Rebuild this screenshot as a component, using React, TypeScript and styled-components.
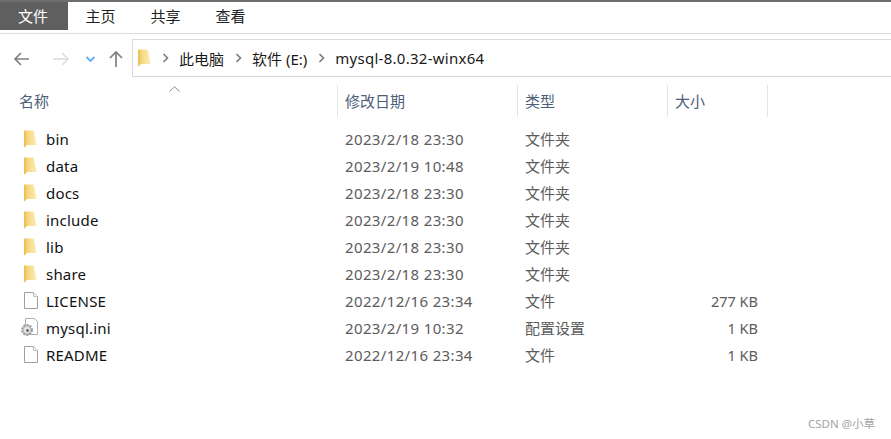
import React from 'react';
import styled, { createGlobalStyle } from 'styled-components';

const FONT = `"Noto Sans", "Noto Sans CJK SC", sans-serif`;

const GlobalStyle = createGlobalStyle`
  html, body {
    margin: 0;
    padding: 0;
    background: #fff;
  }
  body {
    font-family: ${FONT};
    overflow: hidden;
  }
`;

const Window = styled.div`
  position: relative;
  width: 891px;
  height: 439px;
  background: #fff;
  border-top: 2px solid #6d6d6d;
  box-sizing: border-box;
  overflow: hidden;
`;

const Ribbon = styled.div`
  display: flex;
  height: 31px;
  border-bottom: 1px solid #dcdcdc;
`;

const Tab = styled.div<{ $active?: boolean }>`
  width: ${({ $active }) => ($active ? '68px' : '65px')};
  height: 28px;
  box-sizing: border-box;
  padding-bottom: 2px;
  padding-right: ${({ $active }) => ($active ? '2px' : '0')};
  display: flex;
  align-items: center;
  justify-content: center;
  font-size: 15px;
  color: ${({ $active }) => ($active ? '#fff' : '#222')};
  background: ${({ $active }) => ($active ? '#5f5f5f' : 'transparent')};
`;

const NavBar = styled.div`
  display: flex;
  align-items: center;
  margin-top: 5px;
  height: 38px;
`;

const NavButtons = styled.div`
  width: 132px;
  height: 38px;
  flex: none;
  display: flex;
  align-items: center;
`;

const AddressBox = styled.div`
  flex: 1;
  height: 38px;
  box-sizing: border-box;
  border: 1px solid #d9d9d9;
  border-right: none;
  display: flex;
  align-items: center;
  padding-left: 5px;
  font-size: 15px;
  color: #1a1a1a;
`;

const Crumb = styled.span<{ $spaced?: boolean }>`
  white-space: nowrap;
  letter-spacing: ${({ $spaced }) => ($spaced ? '0.27px' : '0')};
`;

const CrumbSep = styled.svg`
  width: 7px;
  height: 10px;
  margin: 0 10px 0 11px;
  flex: none;
`;

const HeaderRow = styled.div`
  display: grid;
  grid-template-columns: 337px 180px 150px 100px 1px;
  height: 32px;
  margin-top: 8px;
  position: relative;
`;

const HeaderCell = styled.div<{ $first?: boolean }>`
  display: flex;
  align-items: center;
  box-sizing: border-box;
  padding-left: ${({ $first }) => ($first ? '19px' : '7px')};
  padding-bottom: 2px;
  border-left: ${({ $first }) => ($first ? 'none' : '1px solid #e5e5e5')};
  font-size: 15px;
  color: #4c607a;
`;

const LastEdge = styled.div`
  background: #e5e5e5;
`;

const SortCaret = styled.svg`
  position: absolute;
  left: 169px;
  top: 1px;
  width: 11px;
  height: 6px;
`;

const List = styled.div`
  margin-top: 8px;
`;

const Row = styled.div`
  display: grid;
  grid-template-columns: 338px 180px 150px 90px;
  height: 27px;
  align-items: center;
  font-size: 15px;
`;

const NameCell = styled.div`
  display: flex;
  align-items: center;
  padding-left: 24px;
  color: #111;
  letter-spacing: 0.2px;
`;

const IconSlot = styled.div`
  width: 22px;
  height: 20px;
  display: flex;
  align-items: center;
  flex: none;
`;

const DateCell = styled.div`
  padding-left: 7px;
  color: #5c5c5c;
  white-space: nowrap;
  letter-spacing: 0.36px;
`;

const TypeCell = styled.div`
  padding-left: 7px;
  color: #5c5c5c;
  white-space: nowrap;
`;

const SizeCell = styled.div`
  font-size: 14.5px;
  text-align: right;
  color: #5c5c5c;
  white-space: nowrap;
`;

const Watermark = styled.div`
  position: absolute;
  right: 16px;
  top: 413px;
  font-size: 11.5px;
  color: #a3a3a3;
`;

const FolderIcon = ({ id }: { id: string }) => (
  <svg width="13" height="18" viewBox="0 0 13 18" style={{ flex: 'none' }}>
    <defs>
      <linearGradient id={id} x1="0" x2="1" y1="0" y2="0">
        <stop offset="0" stopColor="#f1cb62" />
        <stop offset="0.5" stopColor="#f8de90" />
        <stop offset="1" stopColor="#fcebb4" />
      </linearGradient>
    </defs>
    <path d="M0 0.5 H9.5 L10 2 L12.5 15 H3 L0 17.5 Z" fill={`url(#${id})`} />
    <path d="M0 0.5 V17.5 L2 16 V1.5 Z" fill="#ecc35a" />
  </svg>
);

const FileIcon = () => (
  <svg width="14" height="17" viewBox="0 0 14 17">
    <path d="M0.5 0.5 H9.5 L13.5 4.5 V16.5 H0.5 Z" fill="#fff" stroke="#a0a0a0" />
    <path d="M9.5 0.5 V4.5 H13.5" fill="#f2f2f2" stroke="#c4c4c4" />
  </svg>
);

const IniIcon = () => (
  <svg width="18" height="19" viewBox="0 0 18 19" style={{ marginLeft: -3 }}>
    <path d="M4.5 0.5 H13.5 L16.5 3.5 V16.5 H4.5 Z" fill="#fff" stroke="#b0b0b0" />
    <circle cx="6" cy="12" r="5" fill="#c4c4c4" stroke="#a0a0a0" strokeWidth="2" strokeDasharray="2 1.2" />
    <circle cx="6" cy="12" r="3" fill="#e6e6e6" />
    <circle cx="6.5" cy="12.5" r="1.3" fill="#4d4d4d" />
  </svg>
);

type Entry = { name: string; date: string; type: string; size?: string; kind: 'folder' | 'file' | 'ini' };

const entries: Entry[] = [
  { name: 'bin', date: '2023/2/18 23:30', type: '文件夹', kind: 'folder' },
  { name: 'data', date: '2023/2/19 10:48', type: '文件夹', kind: 'folder' },
  { name: 'docs', date: '2023/2/18 23:30', type: '文件夹', kind: 'folder' },
  { name: 'include', date: '2023/2/18 23:30', type: '文件夹', kind: 'folder' },
  { name: 'lib', date: '2023/2/18 23:30', type: '文件夹', kind: 'folder' },
  { name: 'share', date: '2023/2/18 23:30', type: '文件夹', kind: 'folder' },
  { name: 'LICENSE', date: '2022/12/16 23:34', type: '文件', size: '277 KB', kind: 'file' },
  { name: 'mysql.ini', date: '2023/2/19 10:32', type: '配置设置', size: '1 KB', kind: 'ini' },
  { name: 'README', date: '2022/12/16 23:34', type: '文件', size: '1 KB', kind: 'file' },
];

const Chevron = () => (
  <CrumbSep viewBox="0 0 7 10">
    <path d="M1.5 1 L5.5 5 L1.5 9" fill="none" stroke="#7a7a7a" strokeWidth="1.6" />
  </CrumbSep>
);

const App = () => (
  <Window>
    <GlobalStyle />
    <Ribbon>
      <Tab $active>文件</Tab>
      <Tab>主页</Tab>
      <Tab>共享</Tab>
      <Tab>查看</Tab>
    </Ribbon>
    <NavBar>
      <NavButtons>
        <svg width="132" height="38" viewBox="0 0 132 38">
          <path d="M29 20 H15 M21 14 L15 20 L21 26" fill="none" stroke="#7f7f7f" strokeWidth="1.6" />
          <path d="M53 20 H68 M62 14 L68 20 L62 26" fill="none" stroke="#dcdcdc" strokeWidth="1.6" />
          <path d="M86.5 18 L90.5 22 L94.5 18" fill="none" stroke="#5fb0f2" strokeWidth="1.8" />
          <path d="M116 28 V13 M110 19 L116 13 L122 19" fill="none" stroke="#7f7f7f" strokeWidth="1.7" />
        </svg>
      </NavButtons>
      <AddressBox>
        <FolderIcon id="addr-folder" />
        <Chevron />
        <Crumb>此电脑</Crumb>
        <Chevron />
        <Crumb>软件 (E:)</Crumb>
        <Chevron />
        <Crumb $spaced>mysql-8.0.32-winx64</Crumb>
      </AddressBox>
    </NavBar>
    <HeaderRow>
      <SortCaret viewBox="0 0 11 6">
        <path d="M0.5 5.5 L5.5 0.8 L10.5 5.5" fill="none" stroke="#8a8a8a" />
      </SortCaret>
      <HeaderCell $first>名称</HeaderCell>
      <HeaderCell>修改日期</HeaderCell>
      <HeaderCell>类型</HeaderCell>
      <HeaderCell>大小</HeaderCell>
      <LastEdge />
    </HeaderRow>
    <List>
      {entries.map((entry) => (
        <Row key={entry.name}>
          <NameCell>
            <IconSlot>
              {entry.kind === 'folder' && <FolderIcon id={`folder-${entry.name}`} />}
              {entry.kind === 'file' && <FileIcon />}
              {entry.kind === 'ini' && <IniIcon />}
            </IconSlot>
            {entry.name}
          </NameCell>
          <DateCell>{entry.date}</DateCell>
          <TypeCell>{entry.type}</TypeCell>
          <SizeCell>{entry.size}</SizeCell>
        </Row>
      ))}
    </List>
    <Watermark>CSDN @小草</Watermark>
  </Window>
);

export default App;
